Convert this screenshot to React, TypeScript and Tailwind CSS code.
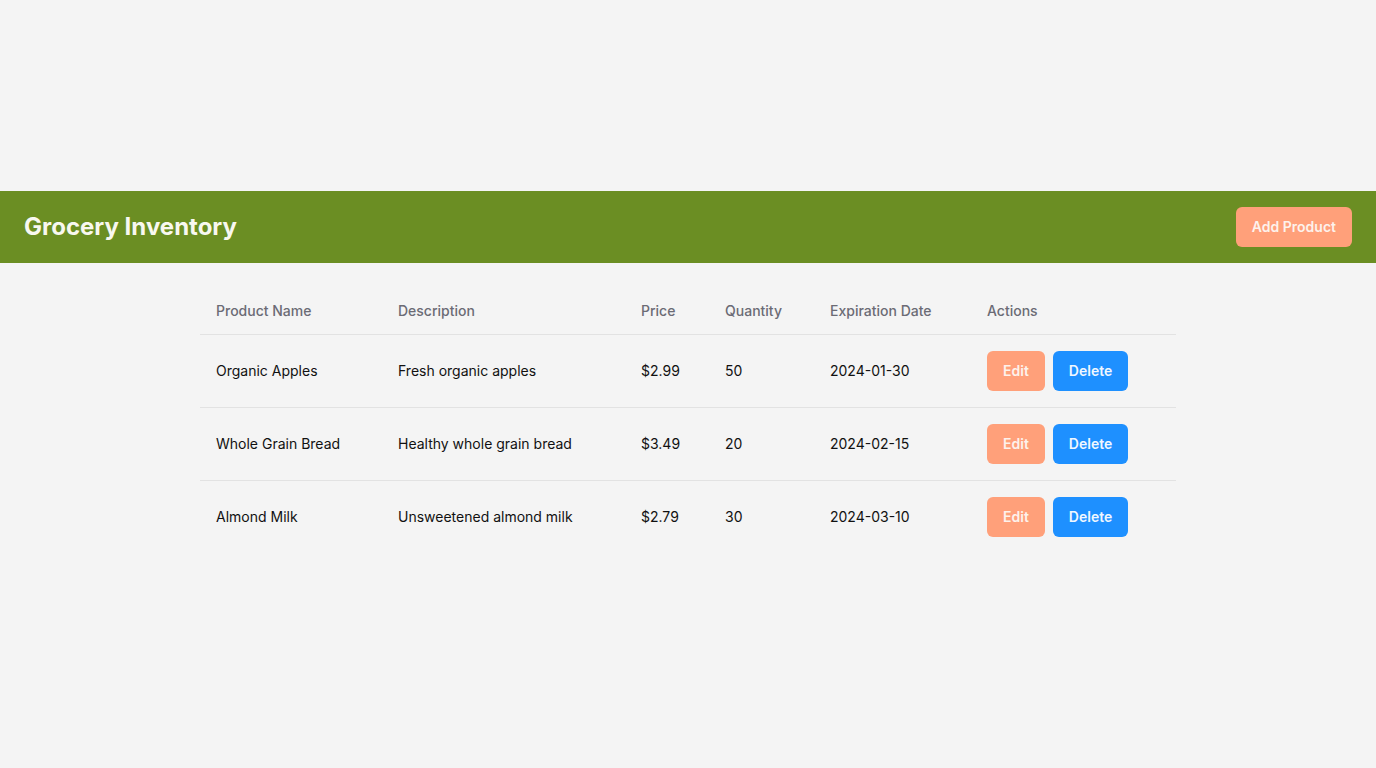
type Product = {
  name: string;
  description: string;
  price: string;
  quantity: number;
  expires: string;
};

const products: Product[] = [
  { name: "Organic Apples", description: "Fresh organic apples", price: "$2.99", quantity: 50, expires: "2024-01-30" },
  { name: "Whole Grain Bread", description: "Healthy whole grain bread", price: "$3.49", quantity: 20, expires: "2024-02-15" },
  { name: "Almond Milk", description: "Unsweetened almond milk", price: "$2.79", quantity: 30, expires: "2024-03-10" },
];

export default function App() {
  return (
    <div className="min-h-screen bg-[#f4f4f4] flex flex-col justify-center font-['Inter',sans-serif]">
      <header className="bg-[#6b8e23] flex items-center justify-between px-6 py-4">
        <h1 className="text-2xl font-bold text-[#f8f8f0]">Grocery Inventory</h1>
        <button className="h-10 px-4 rounded-md bg-[#ffa07a] text-sm font-semibold text-[#fdf2ec]">
          Add Product
        </button>
      </header>

      <main className="max-w-5xl w-full mx-auto px-6 py-6">
        <table className="w-full text-sm text-left border-collapse">
          <thead>
            <tr className="border-b border-[#e2e2e2]">
              <th className="w-[182px] px-4 h-[47px] font-medium text-[#6b6b75]">Product Name</th>
              <th className="w-[243px] px-4 font-medium text-[#6b6b75]">Description</th>
              <th className="w-[84px] px-4 font-medium text-[#6b6b75]">Price</th>
              <th className="w-[105px] px-4 font-medium text-[#6b6b75]">Quantity</th>
              <th className="w-[157px] px-4 font-medium text-[#6b6b75]">Expiration Date</th>
              <th className="px-4 font-medium text-[#6b6b75]">Actions</th>
            </tr>
          </thead>
          <tbody className="text-[#111111]">
            {products.map((p, i) => (
              <tr key={p.name} className={i < products.length - 1 ? "border-b border-[#e2e2e2]" : ""}>
                <td className="px-4 py-4">{p.name}</td>
                <td className="px-4 py-4">{p.description}</td>
                <td className="px-4 py-4">{p.price}</td>
                <td className="px-4 py-4">{p.quantity}</td>
                <td className="px-4 py-4">{p.expires}</td>
                <td className="px-4 py-4">
                  <div className="flex gap-2">
                    <button className="h-10 px-4 rounded-md bg-[#ffa07a] font-semibold text-[#fdf2ec]">Edit</button>
                    <button className="h-10 px-4 rounded-md bg-[#1e90ff] font-semibold text-[#f0f7ff]">Delete</button>
                  </div>
                </td>
              </tr>
            ))}
          </tbody>
        </table>
      </main>
    </div>
  );
}
